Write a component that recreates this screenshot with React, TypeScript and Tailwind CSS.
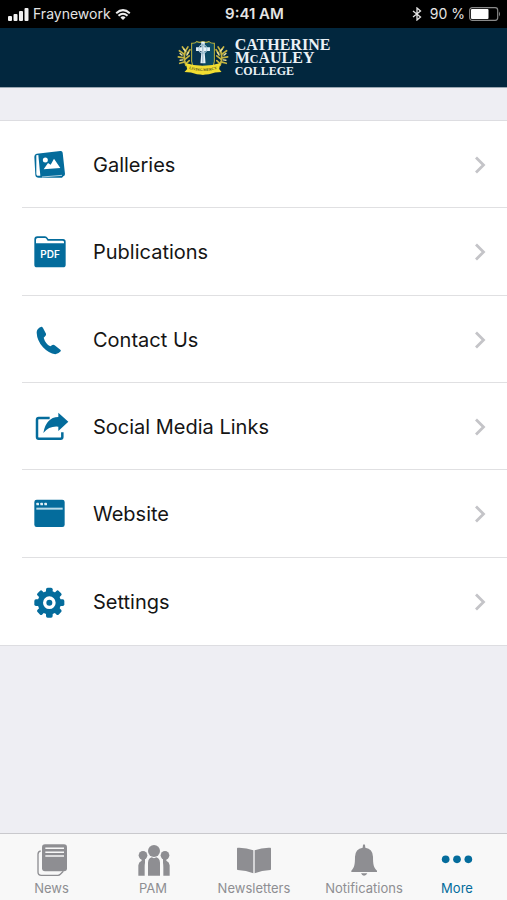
import type { ReactNode } from "react";

const BLUE = "#046c9c";
const GREY = "#8e8e92";

function RowIcon({ children }: { children: ReactNode }) {
  return (
    <svg viewBox="0 0 96 96" className="size-8 shrink-0 overflow-visible" fill={BLUE} aria-hidden="true">
      {children}
    </svg>
  );
}

function GalleriesIcon() {
  return (
    <RowIcon>
      <path d="M8 14 L79 6 Q85 5 86 11 L93 75 Q93 81 88 82 L84 86 H14 Q5 86 4 78 L1 23 Q1 15 8 14Z" />
      <path d="M7 19 L13 18 L19 80 L10 80 Q7 79 7 74Z" fill="#fff" />
      <path d="M24 84 L84 79" stroke="#fff" strokeWidth="2" />
      <circle cx="34" cy="33" r="7.5" fill="#fff" />
      <path d="M29 61 L42 42 L50 47 L60 29 L79 57Z" fill="#fff" />
    </RowIcon>
  );
}

function PublicationsIcon() {
  return (
    <RowIcon>
      <path d="M1 10 Q1 1 10 1 H33 Q38 1 41 6 L43 9 H87 Q95 9 95 17 V86 Q95 94 87 94 H9 Q1 94 1 86Z" />
      <path d="M6 22 V11 Q6 6 11 6 H33 Q36 6 38 10 L41 14 H85 Q90 14 90 18 V22Z" fill="#fff" />
      <text
        x="48"
        y="66"
        textAnchor="middle"
        fontSize="30"
        fontWeight="600"
        fontFamily="Inter, sans-serif"
        fill="#fff"
      >
        PDF
      </text>
    </RowIcon>
  );
}

function PhoneIcon() {
  return (
    <RowIcon>
      <path d="M10 17 Q15 9 22 8 Q25 8 27 12 L36 29 Q37 33 34 36 L29 41 Q34 59 49 67 L55 63 Q59 61 62 64 L79 77 Q82 80 80 82 Q73 90 64 91 Q44 88 27 70 Q9 49 8 26 Q8 21 10 17Z" />
    </RowIcon>
  );
}

function ShareIcon() {
  return (
    <RowIcon>
      <path
        d="M47 21 H14 Q9 21 9 26 V78 Q9 83 14 83 H80 Q85 83 85 78 V64"
        fill="none"
        stroke={BLUE}
        strokeWidth="7.5"
      />
      <path d="M73 5 L103 32 L73 60 V47 Q46 44 28 66 Q36 19 73 18Z" />
    </RowIcon>
  );
}

function WebsiteIcon() {
  return (
    <RowIcon>
      <rect x="1" y="5" width="91" height="82" rx="7" />
      <rect x="7" y="14" width="8" height="8" rx="2" fill="#e3f1f7" />
      <rect x="19" y="14" width="8" height="8" rx="2" fill="#e3f1f7" />
      <rect x="31" y="14" width="8" height="8" rx="2" fill="#e3f1f7" />
      <rect x="7" y="29" width="79" height="6" fill="#b9dbe9" />
    </RowIcon>
  );
}

function SettingsIcon() {
  return (
    <RowIcon>
      <circle cx="46" cy="50" r="35" />
      {[0, 45, 90, 135].map((angle) => (
        <rect key={angle} x="36" y="5" width="20" height="90" rx="5" transform={`rotate(${angle} 46 50)`} />
      ))}
      <circle cx="46" cy="50" r="14" fill={BLUE} stroke="#fff" strokeWidth="10" />
    </RowIcon>
  );
}

function TabIcon({ children }: { children: ReactNode }) {
  return (
    <svg viewBox="0 0 108 96" className="h-8 w-9 overflow-visible" fill="currentColor" aria-hidden="true">
      {children}
    </svg>
  );
}

function NewsIcon() {
  return (
    <TabIcon>
      <path
        d="M20 21 Q12 22 12 31 V84 Q12 94 22 94 H72 Q76 94 79 91 L88 82"
        fill="none"
        stroke={GREY}
        strokeWidth="4"
      />
      <rect x="24" y="1" width="75" height="81" rx="9" />
      <path d="M34 13 H90 M34 25 H90 M34 36 H90" stroke="#f8f8f8" strokeWidth="4.5" />
    </TabIcon>
  );
}

function PeopleIcon() {
  return (
    <TabIcon>
      <circle cx="24" cy="34" r="13" />
      <circle cx="90" cy="34" r="13" />
      <path d="M10 95 V64 Q11 54 20 50 V44 H30 V56 Q29 62 29 70 V95Z M104 95 V64 Q103 54 94 50 V44 H84 V56 Q85 62 85 70 V95Z" />
      <circle cx="57" cy="21" r="21" fill="#f8f8f8" />
      <circle cx="57" cy="21" r="18" />
      <path d="M39 95 V56 Q40 43 50 40 L57 43 L64 40 Q74 43 75 56 V95Z" />
    </TabIcon>
  );
}

function BookIcon() {
  return (
    <TabIcon>
      <path d="M5 11 Q30 10 52 19 V88 Q31 79 5 78 Q3 78 3 75 V14 Q3 11 5 11Z" />
      <path d="M103 11 Q78 10 56 19 V88 Q77 79 103 78 Q105 78 105 75 V14 Q105 11 103 11Z" />
    </TabIcon>
  );
}

function BellIcon() {
  return (
    <TabIcon>
      <path d="M51 3 Q54 -1 57 3 L58 11 Q80 14 81 38 C81 62 83 70 93 80 V84 H16 V80 C25 70 27 62 27 38 Q28 14 50 11Z" />
      <path d="M45 88 H64 Q61 95 54 95 Q48 95 45 88Z" />
    </TabIcon>
  );
}

function MoreIcon() {
  return (
    <TabIcon>
      <circle cx="20" cy="46" r="11.5" />
      <circle cx="54" cy="46" r="11.5" />
      <circle cx="88" cy="46" r="11.5" />
    </TabIcon>
  );
}

function Crest() {
  return (
    <svg viewBox="0 0 153 105" className="h-9 w-[52px]" aria-hidden="true">
      {[false, true].map((mirrored) => (
        <g
          key={String(mirrored)}
          transform={mirrored ? "translate(153 0) scale(-1 1)" : undefined}
          fill="none"
          stroke="#c5b440"
          strokeWidth="5"
          strokeLinecap="round"
        >
          <path d="M32 20 Q14 42 26 74" />
          <path d="M22 42 L7 31 M21 52 L4 49 M23 64 L8 68 M26 34 L16 20 M30 40 L38 28 M24 56 L36 46 M27 68 L36 60" />
          <path d="M9 39 L15 44 M9 59 L17 58 M20 26 L25 32 M34 36 L29 44" stroke="#e8dfa0" strokeWidth="4" />
        </g>
      ))}
      <path
        d="M43 9 Q53 10 58 4 Q67 9 76 4 Q85 9 94 4 Q99 10 110 9 V62 Q108 88 76 101 Q45 88 43 62Z"
        fill="#0b4a63"
        stroke="#b8b03c"
        strokeWidth="3"
      />
      <path d="M76 6 V96 Q48 84 46 62 V12 Q54 12 59 8 Q67 11 76 6Z" fill="#06324d" />
      <path d="M71 5 H82 L81 21 H97 V32 H81 L84 68 H69 L72 32 H56 V21 H72Z" fill="#e6f2f8" />
      <circle cx="76" cy="26" r="12" fill="none" stroke="#a9cbdb" strokeWidth="3.5" />
      <path d="M76 10 V66" stroke="#5f8ea6" strokeWidth="2" />
      <path d="M25 67 Q76 84 128 67 L124 85 L131 94 L112 95 Q76 108 41 95 L22 94 L30 85Z" fill="#f1dd31" />
      <path id="ribbon" d="M34 84 Q76 98 119 84" fill="none" />
      <text fontSize="11" fontWeight="700" fontFamily="Liberation Serif, serif" fill="#4a4a1c">
        <textPath href="#ribbon" startOffset="50%" textAnchor="middle">
          LIVING MERCY
        </textPath>
      </text>
    </svg>
  );
}

function StatusBar() {
  return (
    <div className="grid h-7 grid-cols-[1fr_auto_1fr] items-center bg-black pr-1.5 pl-2 text-sm text-[#e4e4e4]">
      <div className="flex items-center gap-1">
        <svg viewBox="0 0 21 13" className="h-[13px] w-[21px]" fill="#f2f2f2" aria-hidden="true">
          <rect x="0" y="8" width="4" height="5" rx="1" />
          <rect x="5.5" y="6" width="4" height="7" rx="1" />
          <rect x="11" y="3" width="4" height="10" rx="1" />
          <rect x="16.5" y="0" width="4" height="13" rx="1" />
        </svg>
        <span>Fraynework</span>
        <svg viewBox="0 0 48 34" className="h-[11px] w-4" fill="none" stroke="#ededed" aria-hidden="true">
          <path d="M3 13 Q24 -6 45 13" strokeWidth="6" />
          <path d="M10 21 Q24 8 38 21" strokeWidth="6" />
          <path d="M16 26 Q24 19 32 26 L24 34Z" fill="#ededed" stroke="none" />
        </svg>
      </div>
      <time className="text-[15px] font-semibold">9:41 AM</time>
      <div className="flex items-center justify-end gap-1">
        <svg viewBox="0 0 10 14" className="mr-1 h-3.5 w-2.5" fill="none" stroke="#e4e4e4" strokeWidth="1.3" aria-hidden="true">
          <path d="M1 4 L8.5 10 L5 13 V1 L8.5 4 L1 10" />
        </svg>
        <span>90 %</span>
        <svg viewBox="0 0 32 14" className="h-3.5 w-8" aria-hidden="true">
          <rect x="0.7" y="0.7" width="28" height="12.6" rx="2.5" fill="none" stroke="#8a8a8a" strokeWidth="1.2" />
          <rect x="2" y="2" width="17.5" height="10" rx="1" fill="#fff" />
          <path d="M30 4.5 Q32 7 30 9.5Z" fill="#8a8a8a" />
        </svg>
      </div>
    </div>
  );
}

const rows = [
  { label: "Galleries", icon: <GalleriesIcon /> },
  { label: "Publications", icon: <PublicationsIcon /> },
  { label: "Contact Us", icon: <PhoneIcon /> },
  { label: "Social Media Links", icon: <ShareIcon /> },
  { label: "Website", icon: <WebsiteIcon /> },
  { label: "Settings", icon: <SettingsIcon /> },
];

const tabs = [
  { label: "News", icon: <NewsIcon /> },
  { label: "PAM", icon: <PeopleIcon /> },
  { label: "Newsletters", icon: <BookIcon /> },
  { label: "Notifications", icon: <BellIcon /> },
  { label: "More", icon: <MoreIcon />, active: true },
];

export default function App() {
  return (
    <div className="flex min-h-screen flex-col bg-[#eeeef3] font-['Inter',sans-serif]">
      <StatusBar />
      <header className="flex h-[60px] items-center justify-center gap-1.5 border-b border-[#9aa7b2] bg-[#02273e] text-[#eaf1f6]">
        <Crest />
        <h1 className="flex flex-col font-['Liberation_Serif',serif] text-base leading-[13px] font-bold">
          <span>CATHERINE</span>
          <span>
            M<span className="text-xs leading-[13px]">C</span>AULEY
          </span>
          <span className="text-xs leading-[11px]">COLLEGE</span>
        </h1>
      </header>

      <main className="flex-1 pt-8">
        <ul className="grid min-h-[526px] auto-rows-fr border-y border-[#dddde1] bg-white pl-[22px]">
          {rows.map((row) => (
            <li key={row.label} className="flex border-b border-[#e0e0e2] last:border-b-0">
              <a href="#" className="flex flex-1 items-center pt-0.5 pr-[21px] pl-3 text-xl text-[#151515]">
                {row.icon}
                <span className="ml-[27px] flex-1">{row.label}</span>
                <svg viewBox="0 0 12 18" className="h-[18px] w-3" fill="none" stroke="#c4c4c8" strokeWidth="2.8" aria-hidden="true">
                  <path d="M2 1.5 L9.5 9 L2 16.5" />
                </svg>
              </a>
            </li>
          ))}
        </ul>
      </main>

      <nav className="grid grid-cols-[103fr_100fr_102fr_118fr_68fr] border-t border-[#c9c9cd] bg-[#f8f8f8] pt-2.5 pr-4 pb-1">
        {tabs.map((tab) => (
          <a
            key={tab.label}
            href="#"
            aria-current={tab.active ? "page" : undefined}
            className={`flex flex-col items-center gap-1 text-[13px] leading-4 ${tab.active ? "text-[#046c9c]" : "text-[#8e8e92]"}`}
          >
            {tab.icon}
            <span>{tab.label}</span>
          </a>
        ))}
      </nav>
    </div>
  );
}
